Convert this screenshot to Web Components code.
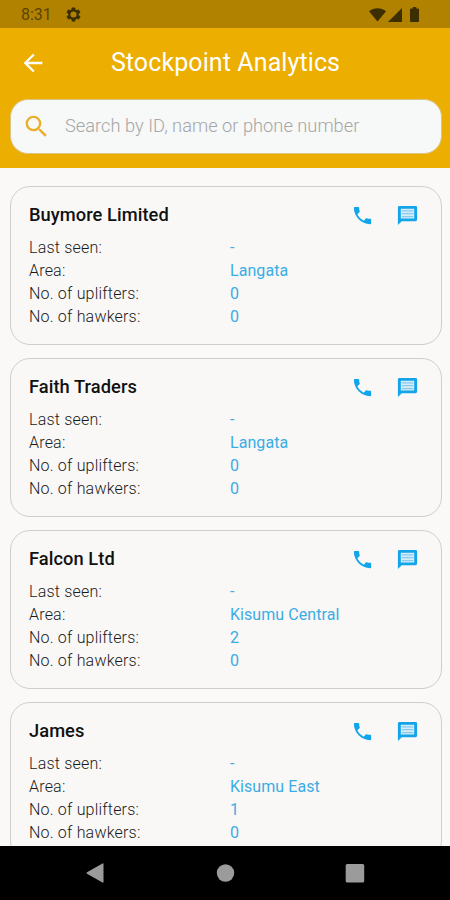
<!DOCTYPE html>
<html lang="en">
<head>
<meta charset="utf-8">
<title>Stockpoint Analytics</title>
<style>
  body {
    margin: 0;
    font-family: Roboto, 'Liberation Sans', sans-serif;
    background: #faf9f7;
  }
</style>
</head>
<body>
<phone-screen>
  <status-bar slot="top" time="8:31"></status-bar>
  <app-header slot="top" header="Stockpoint Analytics">
    <search-box>Search by ID, name or phone number</search-box>
  </app-header>
  <stockpoint-card seen="-" area="Langata" uplifters="0" hawkers="0">Buymore Limited</stockpoint-card>
  <stockpoint-card seen="-" area="Langata" uplifters="0" hawkers="0">Faith Traders</stockpoint-card>
  <stockpoint-card seen="-" area="Kisumu Central" uplifters="2" hawkers="0">Falcon Ltd</stockpoint-card>
  <stockpoint-card seen="-" area="Kisumu East" uplifters="1" hawkers="0">James</stockpoint-card>
  <nav-bar slot="bottom"></nav-bar>
</phone-screen>

<script>
function makeTemplate(html) {
  const template = document.createElement('template');
  template.innerHTML = html;
  return template;
}

class BaseElement extends HTMLElement {
  constructor() {
    super();
    this.attachShadow({ mode: 'open' });
    this.shadowRoot.appendChild(this.constructor.template.content.cloneNode(true));
  }

  setText(selector, attribute) {
    this.shadowRoot.querySelector(selector).textContent = this.getAttribute(attribute);
  }
}

class PhoneScreen extends BaseElement {
  static template = makeTemplate(`
    <style>
      :host {
        display: flex;
        flex-direction: column;
        width: 450px;
        height: 900px;
        overflow: hidden;
      }
      main {
        flex: 1;
        min-height: 0;
        overflow: hidden;
        display: flex;
        flex-direction: column;
        gap: 13px;
        padding: 18px 8px 0 10px;
      }
    </style>
    <slot name="top"></slot>
    <main><slot></slot></main>
    <slot name="bottom"></slot>
  `);
}

class StatusBar extends BaseElement {
  static template = makeTemplate(`
    <style>
      :host {
        display: flex;
        align-items: center;
        box-sizing: border-box;
        height: 28px;
        padding: 1px 31px 0 21px;
        background: #b08200;
        color: #5c4400;
        font-size: 16px;
      }
      svg { display: block; fill: #3d2e00; }
      .gear { margin-left: 13px; }
      .right { margin-left: auto; display: flex; align-items: center; }
      .signal { margin-left: 2px; }
      .battery { margin-left: 8px; }
    </style>
    <span class="time"></span>
    <svg class="gear" width="17" height="17" viewBox="0 0 24 24"><path fill-rule="evenodd" d="M19.4 13a7.500 7.500 0 0 0 0-2l2.100-1.600a.5.5 0 0 0 .1-.6l-2-3.500a.5.5 0 0 0-.6-.2l-2.500 1a7.300 7.300 0 0 0-1.700-1l-.4-2.600a.5.5 0 0 0-.5-.4h-4a.5.5 0 0 0-.5.400L9.100 5.100a7.700 7.700 0 0 0-1.700 1l-2.500-1a.5.5 0 0 0-.6.2l-2 3.500a.5.5 0 0 0 .1.600L4.600 11a7.500 7.500 0 0 0 0 2l-2.100 1.600a.5.5 0 0 0-.1.600l2 3.500c.1.200.4.300.6.200l2.500-1a7.300 7.300 0 0 0 1.700 1l.3 2.600c0 .200.2.400.5.400h4c.2 0 .5-.2.500-.4l.4-2.600a7.700 7.700 0 0 0 1.700-1l2.500 1c.2.100.5 0 .6-.2l2-3.500a.5.5 0 0 0-.1-.6zM12 16.300a4.300 4.300 0 1 1 0-8.600 4.300 4.300 0 0 1 0 8.600z"/></svg>
    <div class="right">
      <svg width="17" height="14" viewBox="0 0 17 14"><path d="M8.500 13.600 0 3.300C5-.7 12-.7 17 3.300z"/></svg>
      <svg class="signal" width="14" height="14" viewBox="0 0 14 14"><path d="M0 14 14 0v14z"/></svg>
      <svg class="battery" width="9" height="15" viewBox="0 0 9 15"><path d="M2.700 0h3.600v1.500H8a1 1 0 0 1 1 1V14a1 1 0 0 1-1 1H1a1 1 0 0 1-1-1V2.500a1 1 0 0 1 1-1h1.700z"/></svg>
    </div>
  `);

  connectedCallback() {
    this.setText('.time', 'time');
  }
}

class AppHeader extends BaseElement {
  static template = makeTemplate(`
    <style>
      :host {
        display: block;
        box-sizing: border-box;
        height: 140px;
        padding: 0 8px 0 10px;
        background: #ecae00;
        color: #fff;
      }
      .bar {
        display: grid;
        grid-template-columns: 46px 1fr 47px;
        align-items: center;
        height: 71px;
      }
      svg { display: block; justify-self: center; fill: #fff; }
      h1 {
        margin: 0;
        padding-bottom: 2px;
        font-size: 25px;
        font-weight: 400;
        line-height: 30px;
        text-align: center;
        letter-spacing: 0.1px;
      }
      .back { margin-bottom: 2px; }
    </style>
    <div class="bar">
      <svg class="back" width="28" height="28" viewBox="0 0 24 24"><path d="M20 11H7.830l5.590-5.590L12 4l-8 8 8 8 1.410-1.410L7.830 13H20v-2z"/></svg>
      <h1></h1>
    </div>
    <slot></slot>
  `);

  connectedCallback() {
    this.setText('h1', 'header');
  }
}

class SearchBox extends BaseElement {
  static template = makeTemplate(`
    <style>
      :host {
        display: flex;
        align-items: center;
        box-sizing: border-box;
        height: 55px;
        padding: 0 11px 2px;
        border: 1px solid #d9c388;
        border-radius: 18px;
        background: #f7f8f8;
        color: #a6a6a6;
        font-size: 18.300px;
        font-weight: 300;
      }
      svg { display: block; margin-top: 1px; fill: #ecae2c; }
      span { margin-left: 14px; white-space: nowrap; }
    </style>
    <svg width="29" height="29" viewBox="0 0 24 24"><path d="M15.500 14h-.79l-.28-.27A6.471 6.471 0 0 0 16 9.500 6.500 6.500 0 1 0 9.500 16c1.610 0 3.090-.59 4.230-1.570l.27.280v.79l5 4.990L20.490 19l-4.990-5zm-6 0C7.010 14 5 11.990 5 9.500S7.010 5 9.500 5 14 7.010 14 9.500 11.990 14 9.500 14z"/></svg>
    <span><slot></slot></span>
  `);
}

class StockpointCard extends BaseElement {
  static template = makeTemplate(`
    <style>
      :host {
        display: block;
        flex: none;
        box-sizing: border-box;
        height: 159px;
        padding: 16px 22px 0 18px;
        border: 1px solid #cfcecd;
        border-radius: 20px;
        background: #f9f8f7;
      }
      .top {
        display: flex;
        align-items: center;
        height: 24px;
        margin-bottom: 9px;
      }
      h2 {
        flex: 1;
        margin: 0;
        font-size: 18.300px;
        font-weight: 500;
        line-height: 24px;
        letter-spacing: 0.06px;
        color: #111;
      }
      svg { display: block; fill: #12a5ea; }
      .chat { margin-left: 22px; }
      dl {
        display: grid;
        grid-template-columns: 201px 1fr;
        grid-auto-rows: 22.900px;
        align-items: center;
        margin: 0;
        font-size: 16px;
        font-weight: 300;
        letter-spacing: 0.2px;
        color: #1a1a1a;
      }
      dd {
        margin: 0;
        font-weight: 400;
        letter-spacing: 0.06px;
        color: #3bace4;
      }
    </style>
    <div class="top">
      <h2><slot></slot></h2>
      <svg width="23" height="23" viewBox="0 0 24 24"><path d="M6.620 10.790c1.440 2.830 3.760 5.140 6.590 6.590l2.200-2.200c.27-.27.67-.36 1.020-.24 1.120.37 2.330.57 3.570.57.550 0 1 .45 1 1V20c0 .55-.45 1-1 1-9.390 0-17-7.610-17-17 0-.55.450-1 1-1h3.500c.55 0 1 .45 1 1 0 1.250.2 2.450.57 3.570.11.350.03.740-.25 1.020l-2.200 2.200z"/></svg>
      <svg class="chat" width="23" height="23" viewBox="0 0 24 24">
        <path fill="#d5ebf5" d="M4 4h16v12H4z"/>
        <path fill-rule="evenodd" d="M3.500 2h17A1.500 1.500 0 0 1 22 3.500v13a1.500 1.500 0 0 1-1.500 1.500H6l-4 4V3.500A1.500 1.500 0 0 1 3.500 2zM5 5v10h14V5z"/>
        <path fill="#86cbed" d="M6 6.500h12v1.200H6zM6 9.500h12v1.200H6zM6 12.500h12v1.200H6z"/>
      </svg>
    </div>
    <dl>
      <dt>Last seen:</dt><dd class="seen"></dd>
      <dt>Area:</dt><dd class="area"></dd>
      <dt>No. of uplifters:</dt><dd class="uplifters"></dd>
      <dt>No. of hawkers:</dt><dd class="hawkers"></dd>
    </dl>
  `);

  connectedCallback() {
    ['seen', 'area', 'uplifters', 'hawkers'].forEach((name) => this.setText('.' + name, name));
  }
}

class NavBar extends BaseElement {
  static template = makeTemplate(`
    <style>
      :host {
        display: grid;
        grid-template-columns: repeat(3, 130px);
        justify-content: center;
        align-items: center;
        justify-items: center;
        flex: none;
        height: 54px;
        background: #000;
      }
      svg { display: block; fill: #9b9b9b; }
    </style>
    <svg width="20" height="20" viewBox="0 0 20 20"><path d="M2 9.200 17.500.5q1-.5 1 .5v18q0 1-1 .5L2 10.800q-1-.8 0-1.600z"/></svg>
    <svg width="20" height="20" viewBox="0 0 20 20"><circle cx="10.500" cy="10" r="8.700"/></svg>
    <svg width="20" height="20" viewBox="0 0 20 20"><rect x=".7" y="1" width="18.500" height="18.500" rx="1.500"/></svg>
  `);
}

window.customElements.define('phone-screen', PhoneScreen);
window.customElements.define('status-bar', StatusBar);
window.customElements.define('app-header', AppHeader);
window.customElements.define('search-box', SearchBox);
window.customElements.define('stockpoint-card', StockpointCard);
window.customElements.define('nav-bar', NavBar);
</script>
</body>
</html>
